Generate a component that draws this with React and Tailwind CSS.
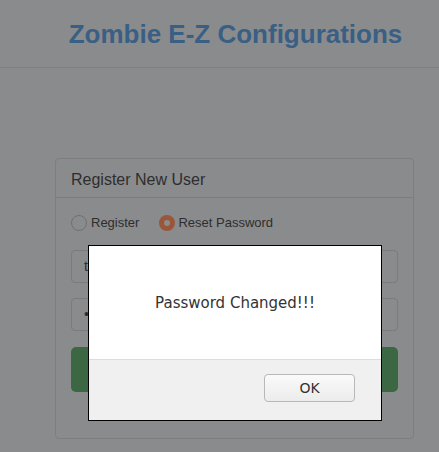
import React, { useState } from "react";

const App = () => {
  const [mode, setMode] = useState("reset");

  return (
    <div className="relative min-h-[452px] bg-[#8a8b8d] font-['Liberation_Sans',Arial,sans-serif]">
      <div className="h-[68px] border-b border-[#7f8082] pl-8 pt-[15px] text-center">
        <h1 className="text-[26px] font-bold text-[#3a5f84]">
          Zombie E-Z Configurations
        </h1>
      </div>

      <div className="ml-[55px] mr-[25px] mt-[90px] rounded border border-[#7d7e80]">
        <div className="h-[39px] border-b border-[#7d7e80] px-[15px] pt-[9px] text-[16px] text-[#2e2e2e]">
          Register New User
        </div>
        <div className="flex flex-col px-[15px] pb-[46px] pt-[15px]">
          <div className="flex h-[20px] items-center text-[13px] text-[#2e2e2e]">
            <label className="flex items-center gap-[4px]" onClick={() => setMode("register")}>
              <span className="h-[16px] w-[16px] rounded-full border border-[#6f7072]" />
              Register
            </label>
            <label className="ml-[20px] flex items-center gap-[3px]" onClick={() => setMode("reset")}>
              <span className="flex h-[16px] w-[16px] items-center justify-center rounded-full bg-[#9a5639]">
                <span className="h-[6px] w-[6px] rounded-full bg-[#8c8c8c]" />
              </span>
              Reset Password
            </label>
          </div>
          <div className="mt-[17px] flex h-[33px] items-center rounded border border-[#7a7b7d] px-[12px] text-[14px] text-[#2e2e2e]">
            test
          </div>
          <div className="mt-[15px] flex h-[33px] items-center rounded border border-[#7a7b7d] px-[12px] text-[14px] text-[#2e2e2e]">
            ••••••
          </div>
          <button className="mt-[16px] h-[45px] rounded-[5px] bg-[#3b6743] text-[17px] text-[#8a8b8d]">
            {mode === "reset" ? "Reset Password" : "Register"}
          </button>
        </div>
      </div>

      <div className="absolute left-[88px] top-[245px] flex h-[176px] w-[294px] flex-col border border-black bg-white font-['DejaVu_Sans',sans-serif]">
        <div className="flex flex-1 items-center justify-center pt-[2px] text-[15px] text-[#333]">
          Password Changed!!!
        </div>
        <div className="flex h-[61px] items-start justify-end border-t border-[#dcdcdc] bg-[#f0f0f0] pr-[26px] pt-[14px]">
          <button className="h-[28px] w-[91px] rounded-[4px] border border-[#b8b8b8] bg-gradient-to-b from-[#fafafa] to-[#ececec] text-[14px] text-[#333]">
            OK
          </button>
        </div>
      </div>
    </div>
  );
};

export default App;
